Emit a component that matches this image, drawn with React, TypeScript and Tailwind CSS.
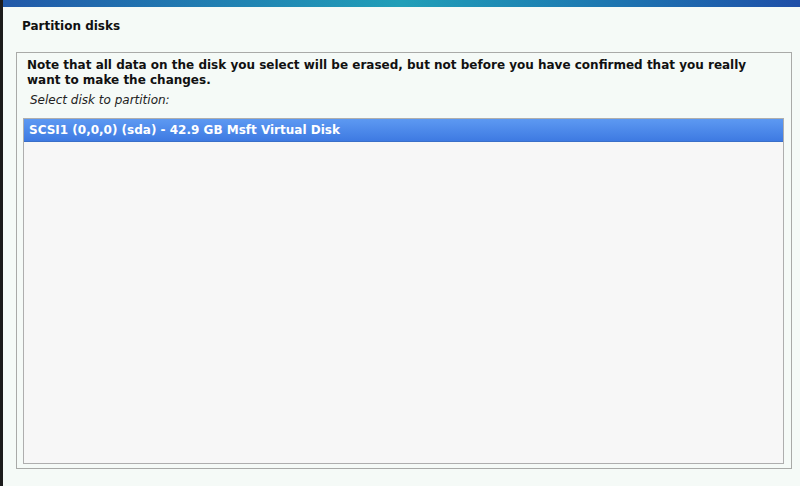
import React from 'react'

const disks = ['SCSI1 (0,0,0) (sda) - 42.9 GB Msft Virtual Disk']

export default function App() {
  const font = { fontFamily: '"DejaVu Sans", Verdana, sans-serif' }

  return (
    <div className="flex w-[800px] h-[486px] overflow-hidden bg-[#f5faf7]" style={font}>
      <div className="w-[3px] bg-[#1c1c1c]" />
      <div className="flex flex-1 flex-col">
        <div className="h-[7px] bg-gradient-to-r from-[#2259a9] via-[#219fb8] to-[#1f4fa8]" />
        <div className="h-[45px] px-[19px] pt-[12px] text-[12px] font-bold leading-[15px] text-[#111]">Partition disks</div>
        <div className="ml-[13px] mr-[8px] flex h-[417px] flex-col border border-[#a9aaa8] pl-[6px] pr-[7px] pb-[4px]">
          <p className="pl-[4px] pr-[30px] pt-[5px] text-[12px] font-bold leading-[15px] text-[#111]">
            Note that all data on the disk you select will be erased, but not before you have confirmed that you really
            want to make the changes.
          </p>
          <div className="pl-[7px] pt-[5px] pb-[10px] text-[12px] italic leading-[15px] text-[#222]">Select disk to partition:</div>
          <div className="flex-1 border border-[#aeaeae] bg-[#f7f7f7]">
            {disks.map((d) => (
              <div
                key={d}
                className="h-[23px] border-b border-[#3a6fc8] bg-gradient-to-b from-[#5d99f2] to-[#3e7ae2] px-[5px] text-[12px] font-bold leading-[22px] text-white"
              >
                {d}
              </div>
            ))}
          </div>
        </div>
      </div>
    </div>
  )
}
